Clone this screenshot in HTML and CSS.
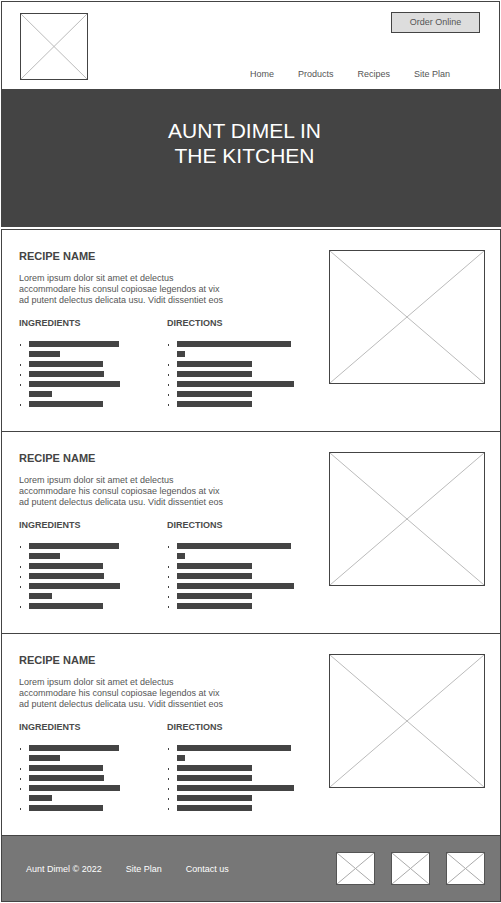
FILE: index.html
```html
<!DOCTYPE html>
<html lang="en">
<head>
  <meta charset="UTF-8">
  <title>Aunt Dimel in the Kitchen</title>
  <link rel="stylesheet" href="styles.css">
</head>
<body>
  <div class="page">
    <header class="site-header">
      <div class="ph logo">
        <svg viewBox="0 0 100 100" preserveAspectRatio="none"><line x1="0" y1="0" x2="100" y2="100"/><line x1="100" y1="0" x2="0" y2="100"/></svg>
      </div>
      <div class="header-right">
        <a class="order-btn" href="#">Order Online</a>
        <nav class="main-nav">
          <a href="#">Home</a>
          <a href="#">Products</a>
          <a href="#">Recipes</a>
          <a href="#">Site Plan</a>
        </nav>
      </div>
    </header>

    <section class="hero">
      <h1>AUNT DIMEL IN THE KITCHEN</h1>
    </section>

    <main id="recipes"></main>

    <footer class="site-footer">
      <span>Aunt Dimel © 2022</span>
      <a href="#">Site Plan</a>
      <a href="#">Contact us</a>
      <div class="social">
        <div class="ph social-icon"><svg viewBox="0 0 100 100" preserveAspectRatio="none"><line x1="0" y1="0" x2="100" y2="100"/><line x1="100" y1="0" x2="0" y2="100"/></svg></div>
        <div class="ph social-icon"><svg viewBox="0 0 100 100" preserveAspectRatio="none"><line x1="0" y1="0" x2="100" y2="100"/><line x1="100" y1="0" x2="0" y2="100"/></svg></div>
        <div class="ph social-icon"><svg viewBox="0 0 100 100" preserveAspectRatio="none"><line x1="0" y1="0" x2="100" y2="100"/><line x1="100" y1="0" x2="0" y2="100"/></svg></div>
      </div>
    </footer>
  </div>

  <script>
    // placeholder bars: each item is one or two line widths
    const ingredients = [[90, 31], [74], [75], [91, 23], [74]];
    const directions = [[114, 8], [75], [75], [117], [75], [75]];

    const cross = '<svg viewBox="0 0 100 100" preserveAspectRatio="none"><line x1="0" y1="0" x2="100" y2="100"/><line x1="100" y1="0" x2="0" y2="100"/></svg>';

    function list(items) {
      return '<ul class="bar-list">' + items.map(item => `
        <li><div class="bars">${item.map(w => `<span class="bar" style="width:${w}px"></span>`).join('')}</div></li>
      `).join('') + '</ul>';
    }

    function recipe() {
      return `
        <article class="recipe">
          <div class="recipe-text">
            <h2>RECIPE NAME</h2>
            <p class="intro">Lorem ipsum dolor sit amet et delectus<br>accommodare his consul copiosae legendos at vix<br>ad putent delectus delicata usu. Vidit dissentiet eos</p>
            <div class="columns">
              <div class="col col-ing">
                <h3>INGREDIENTS</h3>
                ${list(ingredients)}
              </div>
              <div class="col col-dir">
                <h3>DIRECTIONS</h3>
                ${list(directions)}
              </div>
            </div>
          </div>
          <div class="ph recipe-photo">${cross}</div>
        </article>
      `;
    }

    document.getElementById('recipes').innerHTML = recipe() + recipe() + recipe();
  </script>
</body>
</html>
```

FILE: styles.css
```css
* {
  box-sizing: border-box;
}
body {
  margin: 0;
  font-family: 'Liberation Sans', Arial, sans-serif;
  background: #fff;
  color: #555;
}
a {
  color: inherit;
  text-decoration: none;
}
.page {
  width: 500px;
  margin: 1px 0 0 1px;
}

/* placeholder boxes */
.ph {
  border: 1px solid #444;
  background: #fff;
}
.ph svg {
  display: block;
  width: 100%;
  height: 100%;
}
.ph line {
  stroke: #bbb;
  stroke-width: 1;
  vector-effect: non-scaling-stroke;
}

/* header */
.site-header {
  width: 499px;
  height: 88px;
  border: 1px solid #444;
  border-bottom: none;
  display: flex;
  padding: 11px 19px 9px 18px;
}
.logo {
  width: 68px;
  height: 67px;
}
.header-right {
  flex: 1;
  display: flex;
  flex-direction: column;
  justify-content: space-between;
  align-items: flex-end;
}
.order-btn {
  display: block;
  width: 89px;
  height: 21px;
  margin-top: -1px;
  background: #ddd;
  border: 1px solid #444;
  font-size: 9px;
  line-height: 18px;
  text-align: center;
  color: #555;
}
.main-nav {
  display: flex;
  gap: 24px;
  margin-right: 30px;
  font-size: 9px;
  line-height: 11px;
  color: #555;
}

/* hero */
.hero {
  height: 138px;
  background: #444;
  padding: 29px 13px 0 0;
  margin-bottom: 2px;
}
.hero h1 {
  width: 165px;
  margin: 0 auto;
  font-size: 21px;
  line-height: 25px;
  font-weight: normal;
  text-align: center;
  color: #fff;
}

/* recipes */
.recipe {
  height: 203px;
  border: 1px solid #444;
  display: flex;
  padding: 20px 15px 0 17px;
}
.recipe + .recipe {
  margin-top: -1px;
}
.recipe-text {
  flex: 1;
}
.recipe h2 {
  margin: 0;
  font-size: 11px;
  line-height: 13px;
  font-weight: bold;
  color: #444;
}
.intro {
  margin: 10px 0 0;
  font-size: 9px;
  line-height: 11px;
  color: #555;
}
.columns {
  display: flex;
  margin-top: 12px;
}
.col-ing {
  width: 148px;
}
.recipe h3 {
  margin: 0 0 12px;
  font-size: 9px;
  line-height: 11px;
  font-weight: bold;
  color: #4a4a4a;
}
.bar-list {
  list-style: none;
  margin: 0;
  padding: 0;
  display: flex;
  flex-direction: column;
  gap: 4px;
}
.bar-list li {
  display: flex;
  align-items: flex-start;
}
.bar-list li::before {
  content: "";
  width: 1px;
  height: 2px;
  margin: 3px 8px 0 1px;
  background: #444;
}
.bars {
  display: flex;
  flex-direction: column;
  gap: 4px;
}
.bar {
  display: block;
  height: 6px;
  background: #444;
}
.recipe-photo {
  width: 156px;
  height: 134px;
}

/* footer */
.site-footer {
  height: 66px;
  background: #777;
  border: 1px solid #444;
  border-top: none;
  display: flex;
  align-items: center;
  gap: 24px;
  padding: 0 15px 0 24px;
  font-size: 9px;
  color: #fff;
}
.social {
  margin-left: auto;
  display: flex;
  gap: 16px;
}
.social-icon {
  width: 39px;
  height: 33px;
  border-color: #555;
}
.social-icon line {
  stroke: #aaa;
}
```
